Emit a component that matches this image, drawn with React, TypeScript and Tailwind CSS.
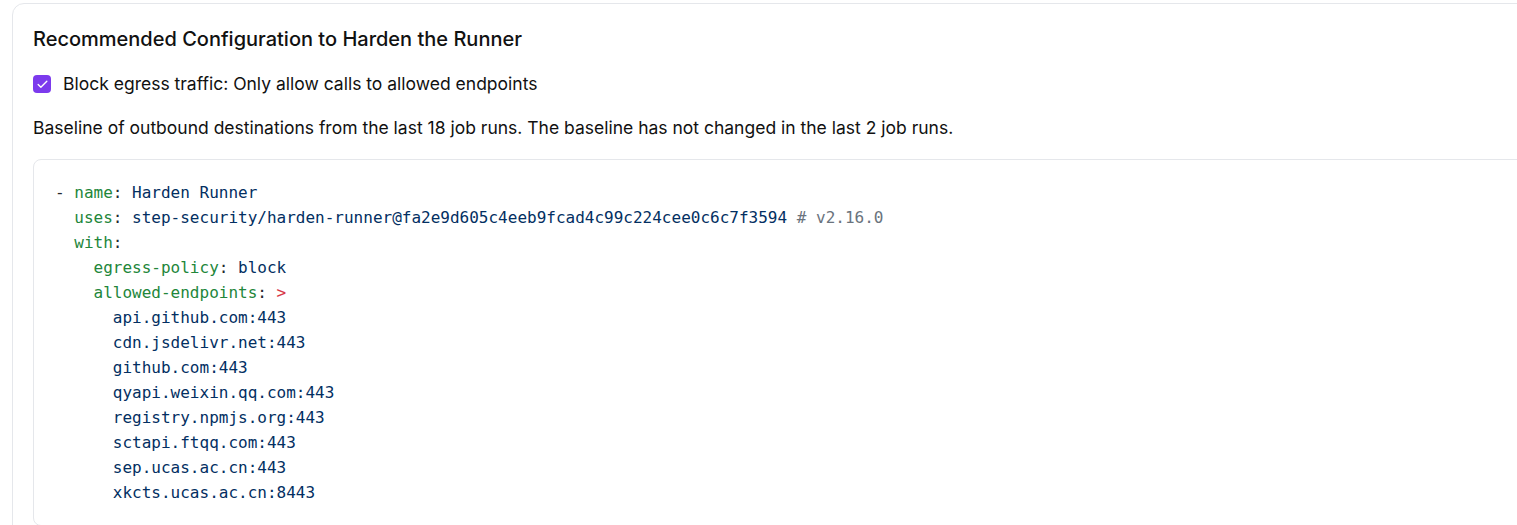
import { Check } from 'lucide-react';

const endpoints = [
    'api.github.com:443',
    'cdn.jsdelivr.net:443',
    'github.com:443',
    'qyapi.weixin.qq.com:443',
    'registry.npmjs.org:443',
    'sctapi.ftqq.com:443',
    'sep.ucas.ac.cn:443',
    'xkcts.ucas.ac.cn:8443',
];

export default function App() {
    return (
        <div className="h-[525px] overflow-hidden bg-white pl-[12px] pt-[3px] font-['Inter',sans-serif] text-[#111111]">
            <div className="w-[1560px] rounded-xl border border-[#e5e7eb] bg-white px-5 pb-5 pt-[21px]">
                <h2 className="text-[20px] font-medium leading-7">
                    Recommended Configuration to Harden the Runner
                </h2>

                <label className="mt-[19px] flex items-center gap-3 text-[17.5px] leading-6">
                    <span className="flex h-[18px] w-[18px] items-center justify-center rounded-[4px] bg-[#7c3aed]">
                        <Check className="h-[13px] w-[13px] text-white" strokeWidth={2.5} />
                    </span>
                    Block egress traffic: Only allow calls to allowed endpoints
                </label>

                <p className="mt-5 text-[17.5px] leading-6">
                    Baseline of outbound destinations from the last 18 job runs. The baseline has not
                    changed in the last 2 job runs.
                </p>

                <pre className="mt-[19px] rounded-lg border border-[#e5e7eb] bg-white px-[21px] pb-5 pt-5 font-['DejaVu_Sans_Mono',monospace] text-base leading-[25px] text-[#032f62]">
                    <div>
                        <span className="text-[#24292e]">- </span>
                        <span className="text-[#22863a]">name</span>
                        <span className="text-[#24292e]">: </span>
                        Harden Runner
                    </div>
                    <div className="pl-[2ch]">
                        <span className="text-[#22863a]">uses</span>
                        <span className="text-[#24292e]">: </span>
                        step-security/harden-runner@fa2e9d605c4eeb9fcad4c99c224cee0c6c7f3594{' '}
                        <span className="text-[#6a737d]"># v2.16.0</span>
                    </div>
                    <div className="pl-[2ch]">
                        <span className="text-[#22863a]">with</span>
                        <span className="text-[#24292e]">:</span>
                    </div>
                    <div className="pl-[4ch]">
                        <span className="text-[#22863a]">egress-policy</span>
                        <span className="text-[#24292e]">: </span>
                        block
                    </div>
                    <div className="pl-[4ch]">
                        <span className="text-[#22863a]">allowed-endpoints</span>
                        <span className="text-[#24292e]">: </span>
                        <span className="text-[#d73a49]">&gt;</span>
                    </div>
                    {endpoints.map((e) => (
                        <div key={e} className="pl-[6ch]">
                            {e}
                        </div>
                    ))}
                </pre>
            </div>
        </div>
    );
}
